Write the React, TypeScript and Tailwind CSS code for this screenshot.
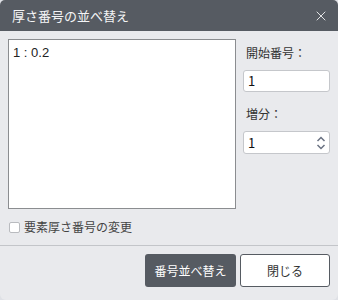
import { X } from "lucide-react";

const FONT = { fontFamily: '"Noto Sans CJK JP", "Noto Sans", sans-serif' };

function Spinner() {
  return (
    <svg width="10" height="16" viewBox="0 0 10 16" className="text-gray-500">
      <path d="M1.5 6 L5 2.5 L8.5 6" fill="none" stroke="currentColor" strokeWidth="1.5" />
      <path d="M1.5 10 L5 13.5 L8.5 10" fill="none" stroke="currentColor" strokeWidth="1.5" />
    </svg>
  );
}

export default function App() {
  return (
    <div className="w-[338px] h-[300px] bg-[#dfe1e6]" style={FONT}>
      <div className="w-full h-full bg-[#e9eaed] rounded-t-[5px] rounded-b-[6px] overflow-hidden flex flex-col">
        {/* title bar */}
        <div className="h-[31px] bg-[#565b62] flex items-center justify-between pl-3 pr-[9px] shrink-0">
          <span className="text-[13px] text-[#f4f5f6]">厚さ番号の並べ替え</span>
          <X size={16} strokeWidth={1.25} className="text-white" />
        </div>

        {/* body */}
        <div className="flex pt-2 pl-2 pr-2 gap-[7px]">
          <div
            className="w-[228px] h-[170px] bg-white border border-[#8b8d90] px-1 py-[3px] text-[13px] text-[#222] whitespace-pre"
            style={{ fontFamily: '"Liberation Sans", sans-serif' }}
          >
            1 : 0.2
          </div>
          <div className="flex flex-col pt-[5px] w-[87px]">
            <span className="text-[12px] text-[#333] pl-[3px]">開始番号：</span>
            <div className="mt-[8px] h-[22px] bg-white border border-[#c5c7cb] rounded-[3px] flex items-center px-[4px] text-[13px] text-[#111]">
              1
            </div>
            <span className="mt-[13px] text-[12px] text-[#333] pl-[3px]">増分：</span>
            <div className="mt-[8px] h-[23px] bg-white border border-[#c5c7cb] rounded-[3px] flex items-center justify-between pl-[4px] pr-[3px] text-[13px] text-[#111]">
              <span>1</span>
              <Spinner />
            </div>
          </div>
        </div>

        {/* checkbox */}
        <div className="flex items-center gap-[4px] pl-[9px] mt-[9px]">
          <span className="w-[11px] h-[11px] bg-white border border-[#b9bbbf] rounded-[2px]" />
          <span className="text-[12px] text-[#444]">要素厚さ番号の変更</span>
        </div>

        {/* footer */}
        <div className="mt-[9px] border-t border-[#c3c5c9] flex justify-end gap-[4px] pt-[8px] pr-2">
          <button className="w-[91px] h-[33px] bg-[#565b62] text-white text-[12px] rounded-[3px]">
            番号並べ替え
          </button>
          <button className="w-[90px] h-[33px] bg-white text-[#333] text-[12px] rounded-[3px] border border-[#565b62]">
            閉じる
          </button>
        </div>
      </div>
    </div>
  );
}
